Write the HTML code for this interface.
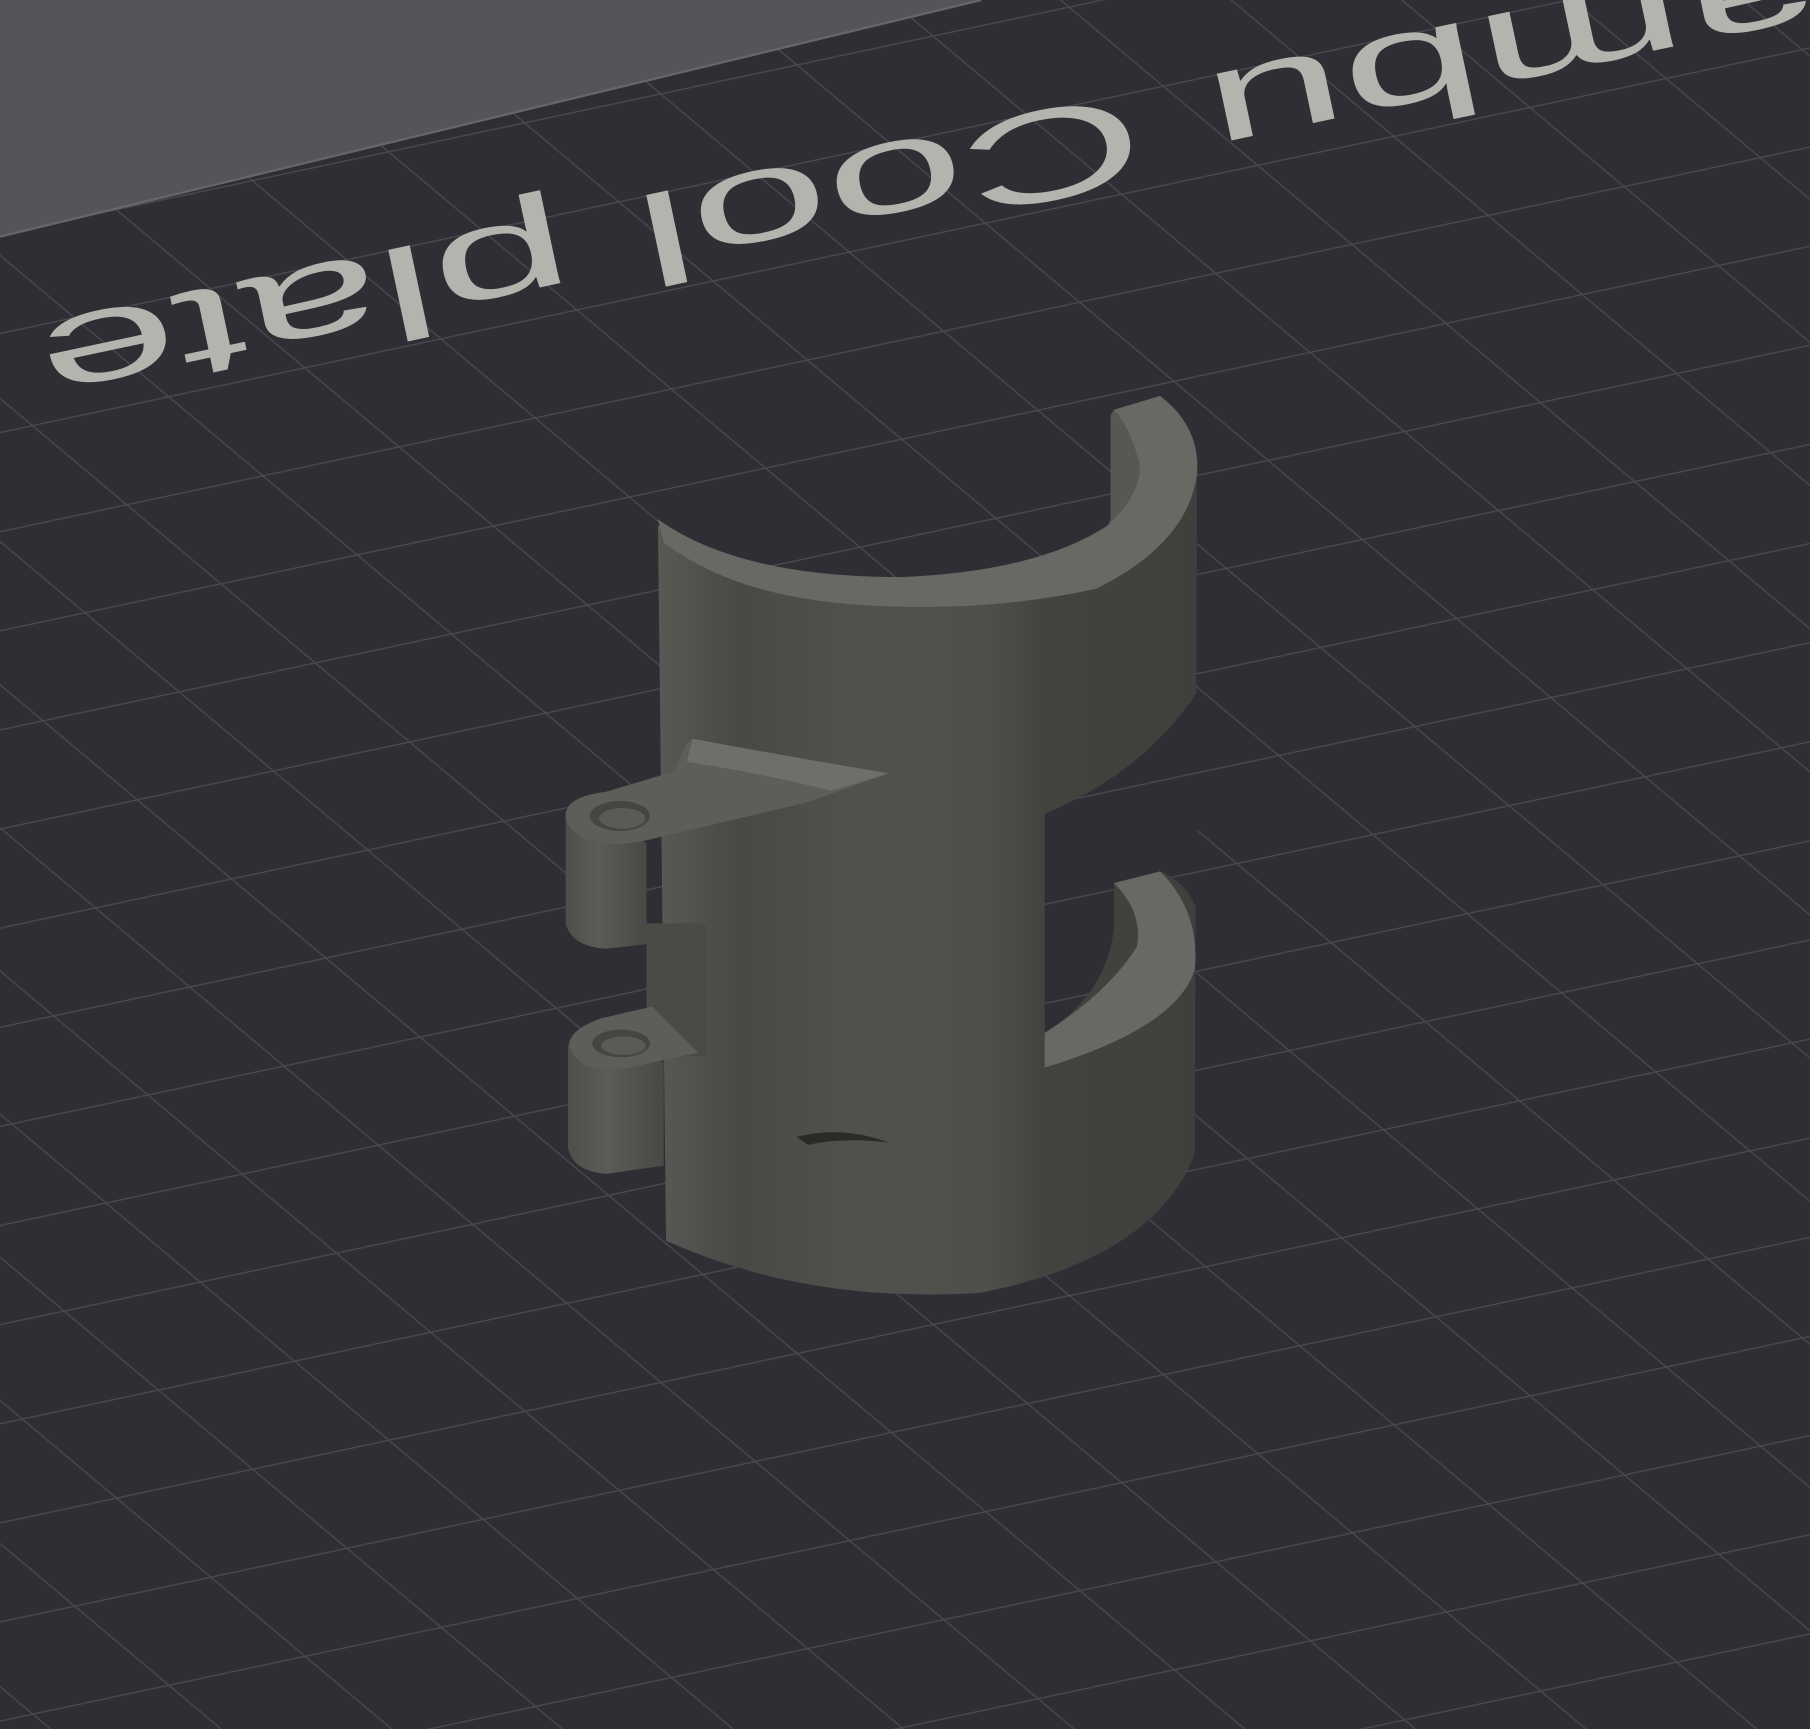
<!DOCTYPE html>
<html><head><meta charset="utf-8"><style>
html,body{margin:0;padding:0;background:#2f2e34;overflow:hidden}
svg{display:block}
</style></head><body>
<svg width="1810" height="1729" viewBox="0 0 1568 1498" preserveAspectRatio="none" xmlns="http://www.w3.org/2000/svg">
<defs>
<pattern id="ga" width="2000" height="84" patternUnits="userSpaceOnUse" patternTransform="rotate(-12) translate(0,30)">
<line x1="0" y1="0.5" x2="2000" y2="0.5" stroke="#4a4950" stroke-width="1.3"/>
</pattern>
<pattern id="gb" width="95" height="2000" patternUnits="userSpaceOnUse" patternTransform="rotate(-50) translate(20,0)">
<line x1="0.5" y1="0" x2="0.5" y2="2000" stroke="#4a4950" stroke-width="1.3"/>
</pattern>
<linearGradient id="body" x1="0" y1="0" x2="1" y2="0">
<stop offset="0" stop-color="#585954"/>
<stop offset="0.15" stop-color="#484945"/>
<stop offset="0.35" stop-color="#50514c"/>
<stop offset="0.6" stop-color="#4f504b"/>
<stop offset="0.72" stop-color="#42433f"/>
<stop offset="1" stop-color="#3f403c"/>
</linearGradient>
<linearGradient id="tab" x1="0" y1="0" x2="1" y2="0">
<stop offset="0" stop-color="#4e4f4a"/>
<stop offset="0.4" stop-color="#5b5c57"/>
<stop offset="1" stop-color="#484945"/>
</linearGradient>
</defs>
<rect width="1568" height="1498" fill="#2f2e34"/>
<rect width="1568" height="1498" fill="url(#ga)"/>
<rect width="1568" height="1498" fill="url(#gb)"/>
<polygon points="0,0 850,0 0,205" fill="#55545b"/>
<line x1="0" y1="205" x2="850" y2="0" stroke="#66656c" stroke-width="2"/>
<text x="28" y="282" transform="rotate(168 28 282)" font-family="Liberation Sans Narrow, Liberation Sans, sans-serif" font-size="112" fill="#b3b4ae" textLength="1720" lengthAdjust="spacingAndGlyphs" dx="-1720">Bambu Cool plate</text>

<path d="M570,455 Q640,520 760,525 Q860,530 950,510 Q1030,470 1037,410 L1035,1000 Q1000,1090 850,1120 Q700,1130 577,1075 Z" fill="url(#body)"/>
<path d="M905,705 Q990,670 1037,600 L1037,790 Q1030,765 1005,755 L965,765 L965,805 Q958,862 905,895 Z" fill="#2f2e34"/>
<path d="M905,705 Q990,670 1037,600 L1037,790 Q1030,765 1005,755 L965,765 L965,805 Q958,862 905,895 Z" fill="url(#ga)"/>
<path d="M570,450 Q640,500 780,500 Q900,495 960,455 Q995,420 985,395 Q978,370 965,355 L1005,343 Q1040,370 1037,410 Q1030,470 950,510 Q860,530 760,525 Q640,520 575,470 Z" fill="#686964"/>
<path d="M965,355 Q978,370 985,395 Q995,420 960,455 L962,450 L962,360 Z" fill="#575853"/>
<path d="M905,895 Q960,860 985,820 Q990,790 965,765 L1005,755 Q1040,790 1035,840 Q1020,890 905,925 Z" fill="#686964"/>
<rect x="560" y="800" width="52" height="115" fill="#4a4b47"/>
<path d="M490,705 L490,800 Q495,820 525,822 L560,818 L560,730 Z" fill="url(#tab)"/>
<path d="M490,705 Q492,690 525,686 L585,668 Q592,645 600,640 Q680,655 770,670 L700,695 L560,728 Q530,735 505,726 Q490,718 490,705 Z" fill="#5d5e59"/>
<path d="M600,640 Q680,655 770,670 L720,685 Q660,670 595,660 Z" fill="#7a7b75" opacity="0.6"/>
<ellipse cx="537" cy="707" rx="26" ry="13" fill="#454642"/>
<ellipse cx="539" cy="709" rx="20" ry="9" fill="#5a5b56"/>
<path d="M492,905 L492,995 Q497,1015 525,1017 L575,1010 L575,920 Z" fill="url(#tab)"/>
<path d="M493,903 Q497,890 522,882 L565,872 L605,912 L545,925 Q515,930 503,920 Q493,912 493,903 Z" fill="#5d5e59"/>
<ellipse cx="538" cy="904" rx="25" ry="12" fill="#454642"/>
<ellipse cx="540" cy="906" rx="19" ry="8" fill="#5a5b56"/>
<path d="M690,985 Q730,975 770,990 Q730,985 700,992 Z" fill="#2a2b28"/>
</svg>
</body></html>
